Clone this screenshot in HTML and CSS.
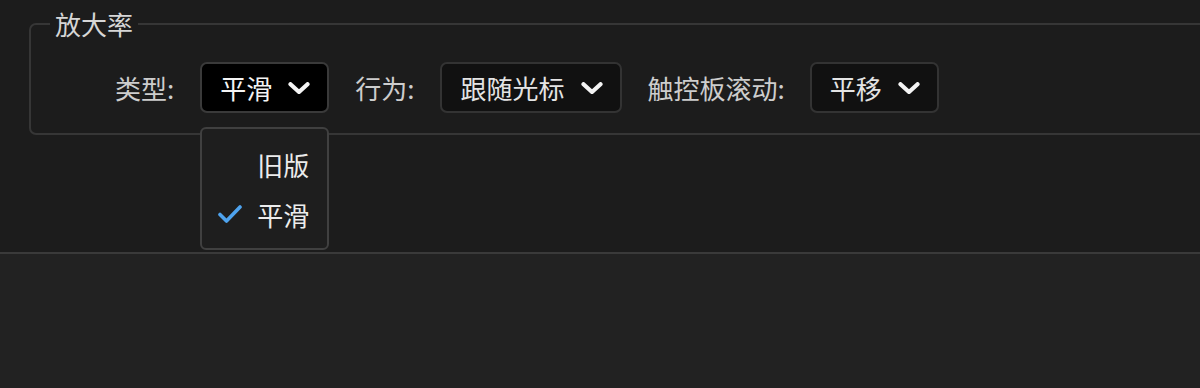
FILE: index.html
```html
<!DOCTYPE html>
<html lang="zh-CN">
<head>
<meta charset="utf-8">
<title>放大率</title>
<link rel="stylesheet" href="styles.css">
</head>
<body>
<div class="panel">
  <fieldset class="group">
    <legend class="group-title">放大率</legend>
    <div class="row">
      <span class="label">类型:</span>
      <div class="combo-wrap">
        <div class="combo combo-focus">
          <span class="combo-text">平滑</span>
          <svg class="chev" width="22" height="12" viewBox="0 0 22 12"><polyline points="2.5,2.2 11,10 19.5,2.2" fill="none" stroke="#f4f4f4" stroke-width="4.2" stroke-linecap="round" stroke-linejoin="round"/></svg>
        </div>
        <div class="menu">
          <div class="menu-item"><span class="check"></span><span>旧版</span></div>
          <div class="menu-item"><span class="check"><svg width="24" height="20" viewBox="0 0 24 20"><polyline points="2,10.5 8.5,17 22,3" fill="none" stroke="#4ea3ee" stroke-width="3.6" stroke-linecap="round" stroke-linejoin="round"/></svg></span><span>平滑</span></div>
        </div>
      </div>
      <span class="label">行为:</span>
      <div class="combo">
        <span class="combo-text">跟随光标</span>
        <svg class="chev" width="22" height="12" viewBox="0 0 22 12"><polyline points="2.5,2.2 11,10 19.5,2.2" fill="none" stroke="#f4f4f4" stroke-width="4.2" stroke-linecap="round" stroke-linejoin="round"/></svg>
      </div>
      <span class="label">触控板滚动:</span>
      <div class="combo combo-last">
        <span class="combo-text">平移</span>
        <svg class="chev" width="22" height="12" viewBox="0 0 22 12"><polyline points="2.5,2.2 11,10 19.5,2.2" fill="none" stroke="#f4f4f4" stroke-width="4.2" stroke-linecap="round" stroke-linejoin="round"/></svg>
      </div>
    </div>
  </fieldset>
</div>
<div class="lower"></div>
</body>
</html>
```

FILE: styles.css
```css
html, body {
  margin: 0;
  padding: 0;
  height: 100%;
}
body {
  background: #1c1c1c;
  font-family: "Noto Sans CJK SC", "Noto Sans", sans-serif;
  color: #d2d2d2;
  display: flex;
  flex-direction: column;
  overflow: hidden;
}
.panel {
  height: 252px;
  box-sizing: border-box;
  padding: 11px 0 0 29px;
  overflow: hidden;
  flex: none;
}
.group {
  margin: 0;
  padding: 0 0 20px 0;
  width: 1220px;
  box-sizing: border-box;
  border: 2px solid #363636;
  border-radius: 7px;
}
.group-title {
  margin-left: 19px;
  padding: 0 5px;
  font-size: 26px;
  line-height: 26px;
  color: #d6d6d6;
}
.row {
  display: flex;
  align-items: center;
  gap: 26px;
  margin-top: 25px;
  padding-left: 84px;
}
.label {
  font-size: 26px;
  line-height: 30px;
  color: #cdcdcd;
}
.combo-wrap {
  position: relative;
}
.combo {
  height: 51px;
  box-sizing: border-box;
  display: flex;
  align-items: center;
  gap: 16px;
  padding: 0 17px 0 18px;
  border: 2px solid #333333;
  border-radius: 7px;
  background: #111111;
}
.combo-last {
  margin-left: -1px;
}
.combo-focus {
  background: #000000;
  border-color: #3a3a3a;
}
.combo-text {
  font-size: 26px;
  line-height: 30px;
  color: #e4e4e4;
}
.combo-focus .combo-text {
  color: #f4f4f4;
}
.chev {
  display: block;
  flex: none;
}
.menu {
  position: absolute;
  left: 0;
  top: 65px;
  width: 129px;
  height: 123px;
  box-sizing: border-box;
  padding: 10px 0;
  background: #1e1e1e;
  border: 2px solid #404040;
  border-radius: 6px;
  z-index: 2;
}
.menu-item {
  height: 50px;
  display: flex;
  align-items: center;
  font-size: 26px;
  color: #ececec;
}
.check {
  width: 24px;
  height: 20px;
  margin: 0 15px 0 16px;
  display: flex;
}
.lower {
  flex: 1;
  background: #222222;
  border-top: 2px solid #3a3a3a;
}
```
